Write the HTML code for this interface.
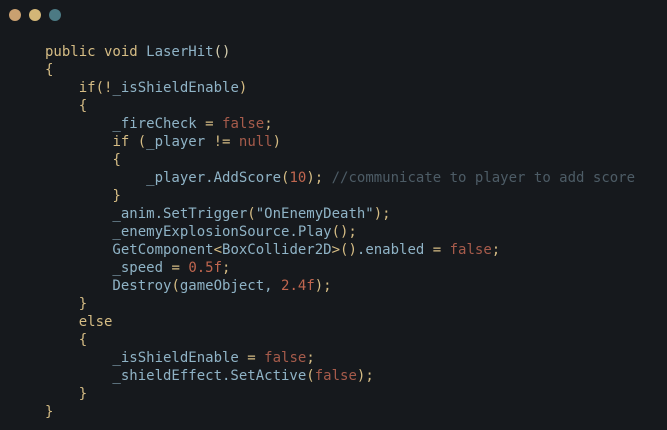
<!DOCTYPE html>
<html><head><style>
html,body{margin:0;padding:0;background:#16191d;width:667px;height:430px;overflow:hidden}
.d{position:absolute;top:9px;width:12px;height:12px;border-radius:50%}
pre{position:absolute;left:45px;top:43px;margin:0;font-family:"DejaVu Sans Mono","Liberation Mono",monospace;font-size:14px;line-height:18px;color:#8fb3c6}
.k{color:#d6bd85}.f{color:#a65b4b}.n{color:#c0664f}.c{color:#4d5c66}.p{color:#d6cfb0}
</style></head><body>
<div class="d" style="left:9px;background:#c9a070"></div>
<div class="d" style="left:29px;background:#d3b677"></div>
<div class="d" style="left:49px;background:#4c7a84"></div>
<pre><span class="k">public void</span> LaserHit<span class="p">()</span>
<span class="k">{</span>
    <span class="k">if(!</span>_isShieldEnable<span class="k">)</span>
    <span class="k">{</span>
        _fireCheck <span class="k">=</span> <span class="f">false</span><span class="k">;</span>
        <span class="k">if (</span>_player <span class="k">!=</span> <span class="f">null</span><span class="k">)</span>
        <span class="k">{</span>
            _player.AddScore<span class="k">(</span><span class="n">10</span><span class="k">);</span> <span class="c">//communicate to player to add score</span>
        <span class="k">}</span>
        _anim.SetTrigger<span class="k">(</span>"OnEnemyDeath"<span class="k">);</span>
        _enemyExplosionSource.Play<span class="k">();</span>
        GetComponent<span class="k">&lt;</span>BoxCollider2D<span class="k">&gt;()</span>.enabled <span class="k">=</span> <span class="f">false</span><span class="k">;</span>
        _speed <span class="k">=</span> <span class="n">0.5f</span><span class="k">;</span>
        Destroy<span class="k">(</span>gameObject, <span class="n">2.4f</span><span class="k">);</span>
    <span class="k">}</span>
    <span class="k">else</span>
    <span class="k">{</span>
        _isShieldEnable <span class="k">=</span> <span class="f">false</span><span class="k">;</span>
        _shieldEffect.SetActive<span class="k">(</span><span class="f">false</span><span class="k">);</span>
    <span class="k">}</span>
<span class="k">}</span></pre>
</body></html>
